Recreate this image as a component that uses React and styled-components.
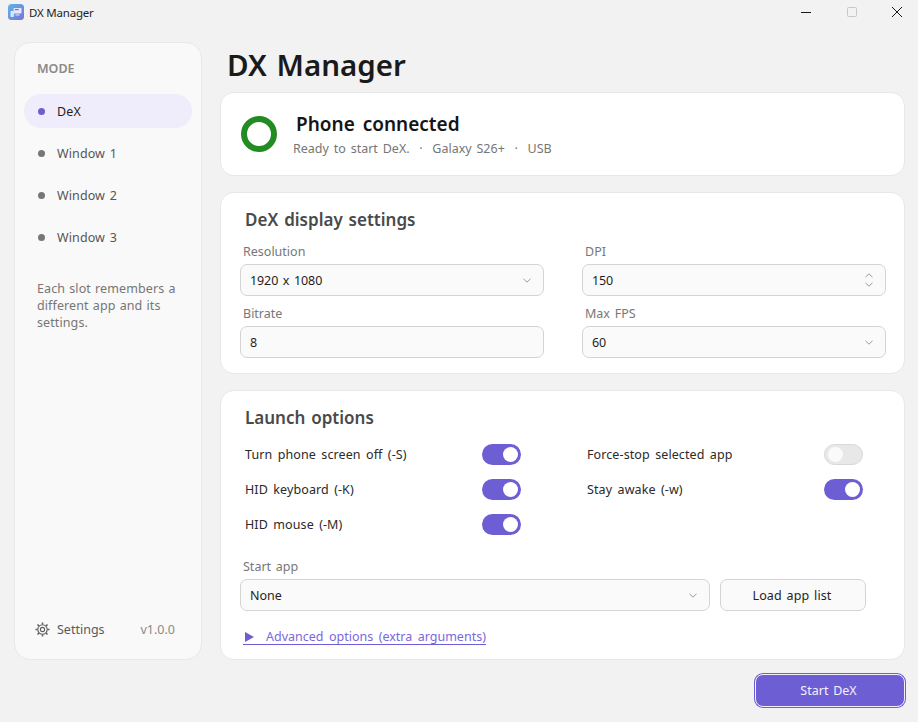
import React from 'react';
import styled, { createGlobalStyle } from 'styled-components';

const ChevronDown = () => (
	<svg width="8" height="5" viewBox="0 0 8 5" fill="none" stroke="#9a9a9a" strokeWidth="1">
		<path d="M0.5 0.8L4 4.2l3.5-3.4" />
	</svg>
);

const ChevronUp = () => (
	<svg width="8" height="5" viewBox="0 0 8 5" fill="none" stroke="#9a9a9a" strokeWidth="1">
		<path d="M0.5 4.2L4 0.8l3.5 3.4" />
	</svg>
);

const AppLogo = () => (
	<svg width="16" height="16" viewBox="0 0 16 16">
		<defs>
			<linearGradient id="logoBg" x1="0" y1="0" x2="1" y2="1">
				<stop offset="0" stopColor="#5fb4e6" />
				<stop offset="1" stopColor="#7a72d8" />
			</linearGradient>
		</defs>
		<rect width="16" height="16" rx="3.5" fill="url(#logoBg)" />
		<rect x="5.5" y="4" width="8" height="5.5" rx="0.8" fill="#e9e6fb" />
		<rect x="6.8" y="5" width="4" height="1.2" fill="#7a72d8" />
		<rect x="2.5" y="7" width="3.4" height="6" rx="0.8" fill="#cdeefc" />
		<rect x="7.5" y="10.5" width="4" height="1" fill="#e9e6fb" />
	</svg>
);

const GearIcon = () => (
	<svg width="15" height="15" viewBox="0 0 15 15" fill="none" stroke="#606060">
		<circle cx="7.5" cy="7.5" r="4.7" strokeWidth="1.1" />
		<circle cx="7.5" cy="7.5" r="2.1" strokeWidth="1.1" />
		<path strokeWidth="1.5" d="M7.5 0.5v2M7.5 12.5v2M0.5 7.5h2M12.5 7.5h2M2.5 2.5l1.4 1.4M11.1 11.1l1.4 1.4M12.5 2.5l-1.4 1.4M3.9 11.1l-1.4 1.4" />
	</svg>
);

const App = () => {
	return (
		<>
			<GlobalStyle />
			<Window>
				<TitleBar>
					<AppLogo />
					<WindowTitle>DX Manager</WindowTitle>
					<WindowControls>
						<svg width="12" height="12" viewBox="0 0 12 12" stroke="#1a1a1a" strokeWidth="1">
							<path d="M1 6.5h10" />
						</svg>
						<svg width="12" height="12" viewBox="0 0 12 12" fill="none" stroke="#c8c8c8" strokeWidth="1">
							<rect x="1.5" y="1.5" width="9" height="9" rx="1" />
						</svg>
						<svg width="12" height="12" viewBox="0 0 12 12" stroke="#1a1a1a" strokeWidth="1">
							<path d="M1 1l10 10M11 1L1 11" />
						</svg>
					</WindowControls>
				</TitleBar>
				<Body>
					<Sidebar>
						<SideHeading>MODE</SideHeading>
						<NavList>
							<NavItem $active><NavDot $active />DeX</NavItem>
							<NavItem><NavDot />Window 1</NavItem>
							<NavItem><NavDot />Window 2</NavItem>
							<NavItem><NavDot />Window 3</NavItem>
						</NavList>
						<SideNote>Each slot remembers a different app and its settings.</SideNote>
						<SideFooter>
							<GearIcon />
							<SettingsLabel>Settings</SettingsLabel>
							<Version>v1.0.0</Version>
						</SideFooter>
					</Sidebar>
					<Main>
						<PageTitle>DX Manager</PageTitle>
						<StatusCard>
							<StatusRing />
							<div>
								<StatusTitle>Phone connected</StatusTitle>
								<StatusLine>Ready to start DeX.&nbsp; ·&nbsp; Galaxy S26+&nbsp; ·&nbsp; USB</StatusLine>
							</div>
						</StatusCard>
						<SettingsCard>
							<CardTitle>DeX display settings</CardTitle>
							<FieldGrid>
								<Field>
									<FieldLabel>Resolution</FieldLabel>
									<InputBox>1920 x 1080<ChevronDown /></InputBox>
								</Field>
								<Field>
									<FieldLabel>DPI</FieldLabel>
									<InputBox>150<Spinner><ChevronUp /><ChevronDown /></Spinner></InputBox>
								</Field>
								<Field>
									<FieldLabel>Bitrate</FieldLabel>
									<InputBox>8</InputBox>
								</Field>
								<Field>
									<FieldLabel>Max FPS</FieldLabel>
									<InputBox>60<ChevronDown /></InputBox>
								</Field>
							</FieldGrid>
						</SettingsCard>
						<LaunchCard>
							<CardTitle>Launch options</CardTitle>
							<ToggleGrid>
								<ToggleRow>Turn phone screen off (-S)<Toggle $on /></ToggleRow>
								<ToggleRow>Force-stop selected app<Toggle /></ToggleRow>
								<ToggleRow>HID keyboard (-K)<Toggle $on /></ToggleRow>
								<ToggleRow>Stay awake (-w)<Toggle $on /></ToggleRow>
								<ToggleRow>HID mouse (-M)<Toggle $on /></ToggleRow>
							</ToggleGrid>
							<StartAppLabel>Start app</StartAppLabel>
							<StartAppRow>
								<GrowBox>None<ChevronDown /></GrowBox>
								<LoadButton>Load app list</LoadButton>
							</StartAppRow>
							<AdvancedLink><Arrow />Advanced options (extra arguments)</AdvancedLink>
						</LaunchCard>
						<ActionRow>
							<StartButton>Start DeX</StartButton>
						</ActionRow>
					</Main>
				</Body>
			</Window>
		</>
	);
};

const GlobalStyle = createGlobalStyle`
	html, body {
		margin: 0;
		background: #f2f2f2;
	}

	body {
		font-family: "Noto Sans", "Open Sans", "Liberation Sans", sans-serif;
		font-size: 12.5px;
		color: #1f1f1f;
		word-spacing: 1.5px;
	}
`;

const Window = styled.div`
	width: 918px;
	height: 722px;
	display: flex;
	flex-direction: column;
	overflow: hidden;
`;

const TitleBar = styled.div`
	box-sizing: border-box;
	height: 27px;
	padding: 0 0 3px 8px;
	display: flex;
	align-items: center;
	gap: 5px;
`;

const WindowTitle = styled.span`
	margin-top: 1px;
	font-size: 11.5px;
	letter-spacing: -0.2px;
	word-spacing: 0;
`;

const WindowControls = styled.div`
	margin-left: auto;
	width: 103px;
	margin-right: 15px;
	display: flex;
	justify-content: space-between;
`;

const Body = styled.div`
	flex: 1;
	display: flex;
	gap: 18px;
	padding: 15px 13px 15px 14px;
`;

const Sidebar = styled.aside`
	width: 188px;
	height: 618px;
	box-sizing: border-box;
	padding: 0 9px 21px 9px;
	display: flex;
	flex-direction: column;
	background: #f9f9f9;
	border: 1px solid #e8e8e8;
	border-radius: 16px;
`;

const SideHeading = styled.div`
	margin: 17px 0 17px 13px;
	font-size: 12.5px;
	font-weight: 600;
	line-height: 17px;
	color: #8a8a8a;
`;

const NavList = styled.div`
	display: flex;
	flex-direction: column;
	gap: 8px;
`;

const NavItem = styled.div`
	height: 34px;
	padding-left: 14px;
	display: flex;
	align-items: center;
	gap: 12px;
	border-radius: 17px;
	letter-spacing: 0.1px;
	background: ${({ $active }) => ($active ? '#efecfb' : 'transparent')};
	color: ${({ $active }) => ($active ? '#1f1f1f' : '#555')};
`;

const NavDot = styled.span`
	width: 7px;
	height: 7px;
	border-radius: 50%;
	background: ${({ $active }) => ($active ? '#6e5ed3' : '#777')};
`;

const SideNote = styled.p`
	margin: 26px 10px 0 13px;
	font-size: 12.5px;
	line-height: 17px;
	color: #767676;
	letter-spacing: 0.1px;
	word-spacing: 0.8px;
`;

const SideFooter = styled.div`
	margin-top: auto;
	padding: 0 17px 0 11px;
	display: flex;
	align-items: center;
	gap: 7px;
`;

const SettingsLabel = styled.span`
	color: #5a5a5a;
`;

const Version = styled.span`
	margin-left: auto;
	color: #8a8a8a;
`;

const Main = styled.main`
	flex: 1;
	display: flex;
	flex-direction: column;
	min-width: 0;
`;

const PageTitle = styled.h1`
	margin: 0 0 4px 7px;
	height: 46px;
	font-size: 29.5px;
	line-height: 46px;
	font-weight: 600;
	color: #1a1a1a;
	word-spacing: 2px;
`;

const Card = styled.section`
	box-sizing: border-box;
	background: #fff;
	border: 1px solid #e8e8e8;
	border-radius: 14px;
`;

const StatusCard = styled(Card)`
	height: 84px;
	padding: 0 20px;
	display: flex;
	align-items: center;
	gap: 16px;
`;

const StatusRing = styled.div`
	box-sizing: border-box;
	width: 36px;
	height: 36px;
	border: 6px solid #228b22;
	border-radius: 50%;
`;

const StatusTitle = styled.div`
	margin-left: 3px;
	font-size: 19px;
	line-height: 26px;
	font-weight: 600;
	color: #151515;
	word-spacing: 3px;
`;

const StatusLine = styled.div`
	margin-top: 3px;
	font-size: 12.5px;
	line-height: 17px;
	color: #767676;
	word-spacing: 1.6px;
`;

const SettingsCard = styled(Card)`
	height: 182px;
	margin-top: 16px;
	padding: 15px 19px 0;
`;

const CardTitle = styled.h2`
	margin: 0 0 0 5px;
	font-size: 17px;
	line-height: 24px;
	font-weight: 600;
	color: #4a4a4a;
`;

const FieldGrid = styled.div`
	margin-top: 11px;
	display: grid;
	grid-template-columns: 304px 304px;
	column-gap: 38px;
	row-gap: 9px;
`;

const Field = styled.div`
	display: flex;
	flex-direction: column;
`;

const FieldLabel = styled.label`
	margin-left: 3px;
	font-size: 12.5px;
	line-height: 17px;
	color: #777;
	margin-bottom: 4px;
`;

const InputBox = styled.div`
	box-sizing: border-box;
	height: 32px;
	padding: 0 12px 0 9px;
	display: flex;
	align-items: center;
	justify-content: space-between;
	background: #fafafa;
	border: 1px solid #d4d4d4;
	border-radius: 7px;
	letter-spacing: -0.1px;
`;

const Spinner = styled.div`
	display: flex;
	flex-direction: column;
	gap: 4px;
`;

const LaunchCard = styled(Card)`
	height: 270px;
	margin-top: 16px;
	padding: 15px 19px 0;
`;

const ToggleGrid = styled.div`
	margin-top: 14px;
	display: grid;
	grid-template-columns: 276px 276px;
	column-gap: 66px;
	row-gap: 14px;
	padding-left: 5px;
`;

const ToggleRow = styled.div`
	height: 21px;
	display: flex;
	align-items: center;
	justify-content: space-between;
	color: #2a2a2a;
	letter-spacing: 0.1px;
	word-spacing: 2px;
`;

const Toggle = styled.span`
	box-sizing: border-box;
	width: 39px;
	height: 21px;
	padding: 0 3px;
	display: flex;
	align-items: center;
	justify-content: ${({ $on }) => ($on ? 'flex-end' : 'flex-start')};
	border-radius: 11px;
	background: ${({ $on }) => ($on ? '#6e5ed3' : '#e8e8e8')};
	border: ${({ $on }) => ($on ? 'none' : '1px solid #d8d8d8')};

	&::after {
		content: '';
		width: 15px;
		height: 15px;
		border-radius: 50%;
		background: ${({ $on }) => ($on ? '#fff' : '#fafafa')};
	}
`;

const StartAppLabel = styled(FieldLabel)`
	display: block;
	margin-top: 23px;
`;

const StartAppRow = styled.div`
	display: flex;
	gap: 10px;
	width: 626px;
`;

const GrowBox = styled(InputBox)`
	flex: 1;
	letter-spacing: 0;
`;

const LoadButton = styled.div`
	box-sizing: border-box;
	width: 146px;
	height: 32px;
	padding-right: 2px;
	display: flex;
	align-items: center;
	justify-content: center;
	background: #fafafa;
	border: 1px solid #d4d4d4;
	border-radius: 7px;
	letter-spacing: 0.1px;
`;

const AdvancedLink = styled.a`
	margin: 18px 0 0 3px;
	display: inline-flex;
	align-items: center;
	gap: 12px;
	line-height: 15px;
	color: #7a68dc;
	border-bottom: 1px solid #6e5ed3;
	word-spacing: 2.2px;
`;

const Arrow = styled.span`
	margin-left: 2px;
	width: 0;
	height: 0;
	border-left: 9px solid #6e5ed3;
	border-top: 5px solid transparent;
	border-bottom: 5px solid transparent;
`;

const ActionRow = styled.div`
	margin-top: 14px;
	display: flex;
	justify-content: flex-end;
`;

const StartButton = styled.div`
	box-sizing: border-box;
	width: 150px;
	height: 33px;
	padding-right: 3px;
	display: flex;
	align-items: center;
	justify-content: center;
	color: #f2f0fc;
	background: #6e5ed3;
	border: 1px solid #f2f0fc;
	border-radius: 8px;
	box-shadow: 0 0 0 1px #6e5ed3;
`;

export default App;
